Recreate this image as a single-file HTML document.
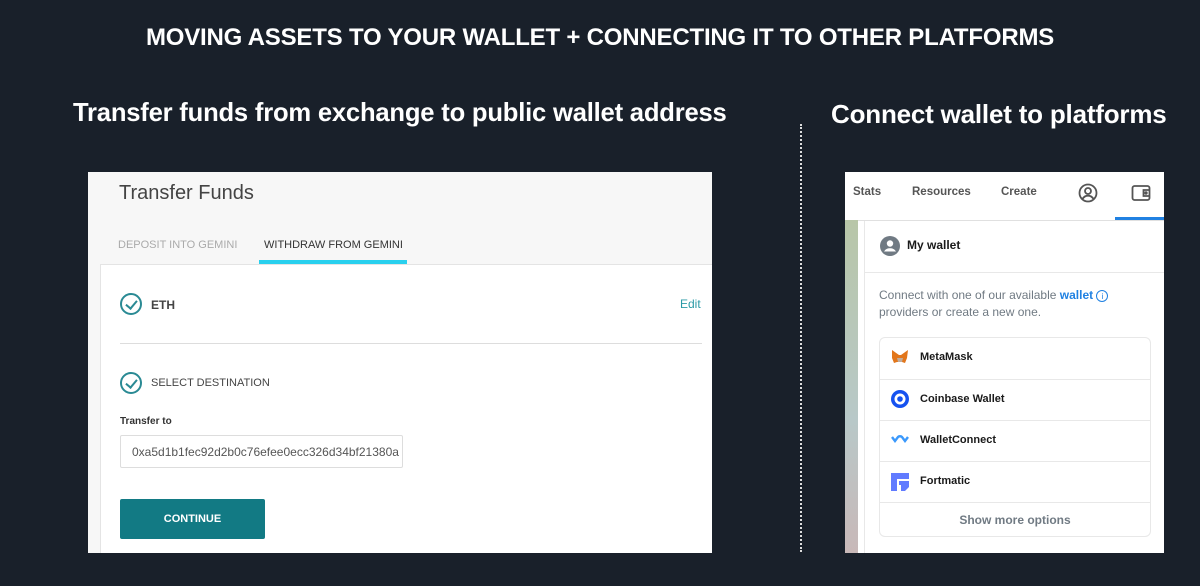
<!DOCTYPE html>
<html><head><style>
*{margin:0;padding:0;box-sizing:border-box}
body{width:1200px;height:586px;background:#19202a;font-family:"Liberation Sans",sans-serif;position:relative;overflow:hidden;color:#fff}
.a{position:absolute;white-space:nowrap}
.h1{left:0;width:1200px;text-align:center;top:24px;font-size:24px;font-weight:bold;letter-spacing:-0.2px}
.h2{top:99px;font-size:26px;font-weight:bold;letter-spacing:-0.2px}
.dots{left:800px;top:124px;height:428px;border-left:2px dotted #ddd}
.lp{left:88px;top:172px;width:624px;height:381px;background:#f7f7f7;color:#333}
.card{position:absolute;left:12px;top:92px;width:612px;height:289px;background:#fff;border-left:1px solid #e4e4e4;border-top:1px solid #e4e4e4}
.chk{position:absolute;width:22px;height:22px;border:2px solid #2a8a94;border-radius:50%}
.chk:after{content:"";position:absolute;left:6px;top:3px;width:5px;height:9px;border:solid #2a8a94;border-width:0 2px 2px 0;transform:rotate(40deg)}
.rp{left:845px;top:172px;width:319px;height:381px;background:#fff;color:#1a1a1a;overflow:hidden}
.row{position:absolute;left:34px;width:272px;height:41px;border-top:1px solid #e8e8e8;font-size:11px;font-weight:bold;padding:13px 0 0 41px}
.nav{top:14px;font-size:11.5px;font-weight:bold;color:#555}
</style></head><body>
<div class="a h1">MOVING ASSETS TO YOUR WALLET + CONNECTING IT TO OTHER PLATFORMS</div>
<div class="a h2" style="left:73px;font-size:25.6px">Transfer funds from exchange to public wallet address</div>
<div class="a h2" style="left:831px">Connect wallet to platforms</div>
<div class="a dots"></div>

<div class="a lp">
 <div class="a" style="left:31px;top:10px;font-size:20px;color:#444">Transfer Funds</div>
 <div class="a" style="left:30px;top:67px;font-size:11px;color:#aaa">DEPOSIT INTO GEMINI</div>
 <div class="a" style="left:176px;top:67px;font-size:11px;color:#333">WITHDRAW FROM GEMINI</div>
 <div class="a" style="left:171px;top:88px;width:148px;height:4px;background:#29d0ee"></div>
 <div class="card">
  <div class="chk" style="left:19px;top:28px"></div>
  <div class="a" style="left:50px;top:33px;font-size:12px;font-weight:bold;color:#444">ETH</div>
  <div class="a" style="left:579px;top:32px;font-size:12px;color:#2a9aa6">Edit</div>
  <div class="a" style="left:19px;top:78px;width:582px;height:1px;background:#ddd"></div>
  <div class="chk" style="left:19px;top:107px"></div>
  <div class="a" style="left:50px;top:112px;font-size:11px;color:#444">SELECT DESTINATION</div>
  <div class="a" style="left:19px;top:151px;font-size:10px;font-weight:bold;color:#333">Transfer to</div>
  <div class="a" style="left:19px;top:170px;width:283px;height:33px;border:1px solid #ddd;border-radius:2px;font-size:12px;color:#555;padding:9px 0 0 11px;overflow:hidden">0xa5d1b1fec92d2b0c76efee0ecc326d34bf21380a</div>
  <div class="a" style="left:19px;top:234px;width:145px;height:40px;background:#127a84;border-radius:2px;color:#fff;font-size:11px;font-weight:bold;text-align:center;line-height:40px">CONTINUE</div>
 </div>
</div>

<div class="a rp">
 <div class="a" style="left:0;top:48px;width:13px;height:333px;background:linear-gradient(#b8c6a8,#b8c8c8 60%,#c8b8b8)"></div>
 <div class="a" style="left:13px;top:48px;width:306px;height:1px;background:#e0e0e0"></div>
 <div class="a nav" style="left:8px">Stats</div>
 <div class="a nav" style="left:67px">Resources</div>
 <div class="a nav" style="left:156px">Create</div>
 <svg class="a" style="left:233px;top:11px" width="20" height="20" viewBox="0 0 20 20" fill="none" stroke="#555" stroke-width="1.8"><circle cx="10" cy="10" r="8.5"/><circle cx="10" cy="8" r="3"/><path d="M4.5 16c1.5-2.5 3.5-3.3 5.5-3.3s4 .8 5.5 3.3"/></svg>
 <svg class="a" style="left:286px;top:12px" width="20" height="18" viewBox="0 0 20 18" fill="none" stroke="#555" stroke-width="1.8"><rect x="1.5" y="2" width="17" height="14" rx="2"/><path d="M18.5 6h-6v6h6"/><circle cx="15" cy="9" r="0.8" fill="#555"/></svg>
 <div class="a" style="left:270px;top:45px;width:49px;height:3px;background:#2081e2"></div>
 <div class="a" style="left:19px;top:49px;width:1px;height:332px;background:#e8e8e8"></div>
 <svg class="a" style="left:35px;top:64px" width="20" height="20" viewBox="0 0 20 20"><circle cx="10" cy="10" r="10" fill="#707a83"/><circle cx="10" cy="7.5" r="3.2" fill="#fff"/><path d="M4 15.5c1.5-2.5 3.5-3.3 6-3.3s4.5.8 6 3.3" fill="#fff"/></svg>
 <div class="a" style="left:62px;top:66px;font-size:12px;font-weight:bold">My wallet</div>
 <div class="a" style="left:20px;top:100px;width:299px;height:1px;background:#e8e8e8"></div>
 <div class="a" style="left:34px;top:115px;font-size:12px;color:#707a83;line-height:17px">Connect with one of our available <b style="color:#2081e2">wallet</b> <span style="color:#2081e2;border:1px solid #2081e2;border-radius:50%;display:inline-block;width:12px;height:12px;font-size:8px;text-align:center;line-height:11px">i</span><br>providers or create a new one.</div>
 <div class="a" style="left:34px;top:165px;width:272px;height:200px;border:1px solid #e8e8e8;border-radius:6px"></div>
 <div class="row" style="top:166px;border-top:none">MetaMask</div>
 <div class="row" style="top:207px">Coinbase Wallet</div>
 <div class="row" style="top:248px">WalletConnect</div>
 <div class="row" style="top:289px">Fortmatic</div>
 <div class="row" style="top:330px;padding:10px 0 0 0;text-align:center;color:#707a83;font-size:12px">Show more options</div>
 <svg class="a" style="left:46px;top:177px" width="18" height="16" viewBox="0 0 18 16"><path d="M1 1l7 5h2l7-5-1 8-2 5-3-1H6l-3 1-2-5z" fill="#e2761b"/><path d="M6 9h6l-1 4H7z" fill="#c0ad9e"/></svg>
 <svg class="a" style="left:46px;top:218px" width="18" height="18" viewBox="0 0 18 18"><circle cx="9" cy="9" r="9" fill="#1652f0"/><circle cx="9" cy="9" r="5.5" fill="#fff"/><circle cx="9" cy="9" r="2.8" fill="#1652f0"/></svg>
 <svg class="a" style="left:46px;top:262px" width="18" height="10" viewBox="0 0 18 10"><path d="M1 3l3 4 3-4c1-1 3-1 4 0l3 4 3-4" fill="none" stroke="#3b99fc" stroke-width="2.4"/></svg>
 <svg class="a" style="left:46px;top:301px" width="18" height="18" viewBox="0 0 18 18" fill="#617bff"><path d="M0 0h18v6H6v12H0z"/><path d="M8 8h10v6l-4 4h-4v-6H8z"/></svg>
</div>
</body></html>
